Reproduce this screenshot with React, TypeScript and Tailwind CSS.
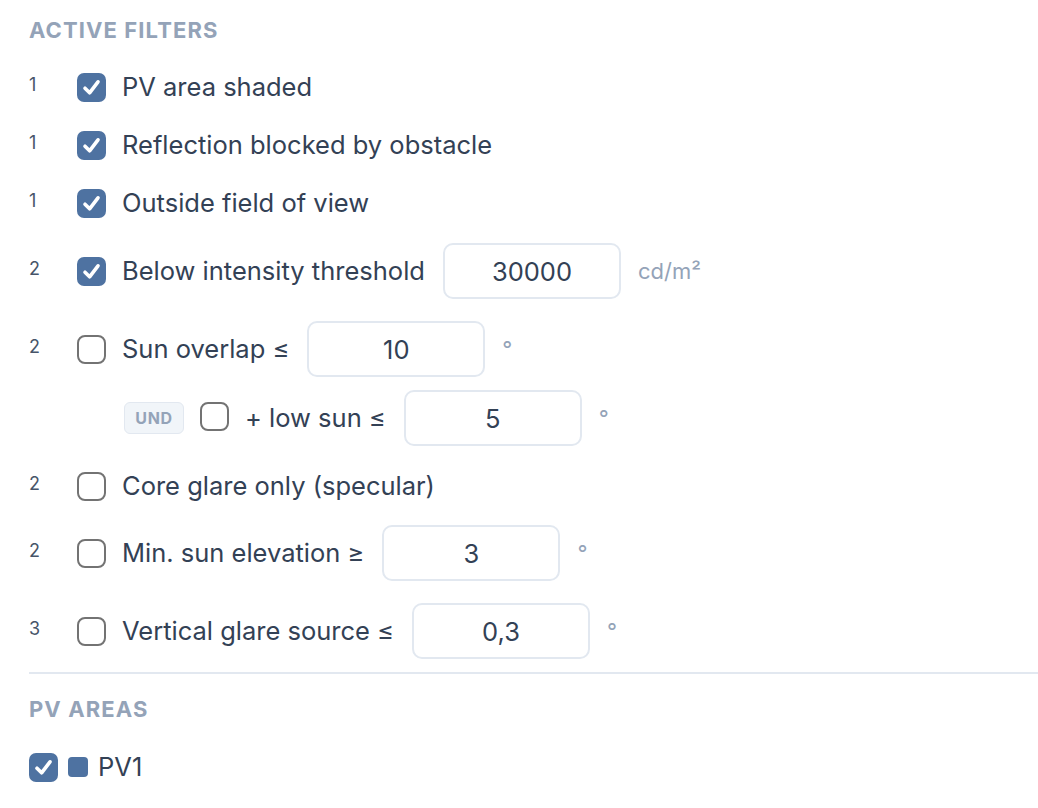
import React, {useState} from "react";

const font = {fontFamily: "Inter, 'Noto Sans', sans-serif"};

const Box = ({checked, onClick}: {checked: boolean; onClick: () => void}) => (
  <button
    type="button"
    onClick={onClick}
    className={
      checked
        ? "w-[29px] h-[29px] rounded-[7px] bg-[#4e72a1] flex items-center justify-center shrink-0"
        : "w-[29px] h-[29px] rounded-[8px] border-[2.5px] border-[#737373] bg-white shrink-0"
    }
  >
    {checked && (
      <svg width="29" height="29" viewBox="0 0 29 29" fill="none">
        <path d="M8 15.2 L12.6 19.8 L21 8.8" stroke="white" strokeWidth="3.6" strokeLinecap="round" strokeLinejoin="round"/>
      </svg>
    )}
  </button>
);

const NumInput = ({value}: {value: string}) => (
  <input
    defaultValue={value}
    className="w-[178px] h-[56px] ml-[18px] border-2 border-[#e2e8f0] rounded-[10px] text-center text-[25.5px] text-[#334155] outline-none bg-white"
    style={font}
  />
);

const Unit = ({children}: {children: React.ReactNode}) => (
  <span className="ml-[17px] text-[22px] text-[#94a3b8]">{children}</span>
);

interface Filter {
  level: number;
  label: string;
  checked: boolean;
  value?: string;
  unit?: string;
}

const filters: Filter[] = [
  {level: 1, label: "PV area shaded", checked: true},
  {level: 1, label: "Reflection blocked by obstacle", checked: true},
  {level: 1, label: "Outside field of view", checked: true},
  {level: 2, label: "Below intensity threshold", checked: true, value: "30000", unit: "cd/m²"},
  {level: 2, label: "Sun overlap ≤", checked: false, value: "10", unit: "°"},
  {level: 2, label: "Core glare only (specular)", checked: false},
  {level: 2, label: "Min. sun elevation ≥", checked: false, value: "3", unit: "°"},
  {level: 3, label: "Vertical glare source ≤", checked: false, value: "0,3", unit: "°"},
];

const FilterRow = ({f, checked, toggle, className = ""}: {f: Filter; checked: boolean; toggle: () => void; className?: string}) => (
  <div className={"flex items-center min-h-[36px] " + className}>
    <span className="w-[48px] text-[18px] text-[#475569] pb-[5px]">{f.level}</span>
    <Box checked={checked} onClick={toggle}/>
    <span className="ml-[16px] text-[25.5px] text-[#334155] leading-[36px]">{f.label}</span>
    {f.value && <NumInput value={f.value}/>}
    {f.unit && <Unit>{f.unit}</Unit>}
  </div>
);

export default function App() {
  const [state, setState] = useState(filters.map(f => f.checked));
  const [lowSun, setLowSun] = useState(false);
  const [pv1, setPv1] = useState(true);

  const toggle = (i: number) => setState(s => s.map((v, j) => (j === i ? !v : v)));

  const row = (i: number, className?: string) => (
    <FilterRow key={i} f={filters[i]} checked={state[i]} toggle={() => toggle(i)} className={className}/>
  );

  return (
    <div className="w-[1038px] min-h-[808px] bg-white pt-[16px]" style={font}>
      <div className="pl-[29px]">
        <h2 className="text-[22px] leading-[28px] font-bold tracking-[0.05em] text-[#94a3b8]">ACTIVE FILTERS</h2>
        <div className="mt-[25px] flex flex-col gap-[22px]">
          {row(0)}
          {row(1)}
          {row(2)}
          {row(3)}
          <div className="flex flex-col gap-[13px]">
            {row(4)}
            <div className="flex items-center pl-[95px]">
              <span className="w-[60px] h-[32px] rounded-[6px] bg-[#f1f5f9] border border-[#e2e8f0] flex items-center justify-center text-[16px] font-bold tracking-[0.04em] text-[#94a3b8]">UND</span>
              <div className="ml-[16px]">
                <Box checked={lowSun} onClick={() => setLowSun(!lowSun)}/>
              </div>
              <span className="ml-[16px] text-[25.5px] text-[#334155] leading-[36px]">+ low sun ≤</span>
              <NumInput value="5"/>
              <Unit>°</Unit>
            </div>
          </div>
          {row(5)}
          {row(6, "-mt-[1px]")}
          {row(7)}
        </div>
        <div className="mt-[13px] h-[2px] bg-[#e2e8f0]"/>
        <h2 className="mt-[21px] text-[22px] leading-[28px] font-bold tracking-[0.05em] text-[#94a3b8]">PV AREAS</h2>
        <div className="mt-[26px] flex items-center">
          <Box checked={pv1} onClick={() => setPv1(!pv1)}/>
          <span className="ml-[10px] w-[20px] h-[20px] rounded-[4px] bg-[#4e72a1]"/>
          <span className="ml-[10px] text-[25.5px] text-[#334155] leading-[36px]">PV1</span>
        </div>
      </div>
    </div>
  );
}
